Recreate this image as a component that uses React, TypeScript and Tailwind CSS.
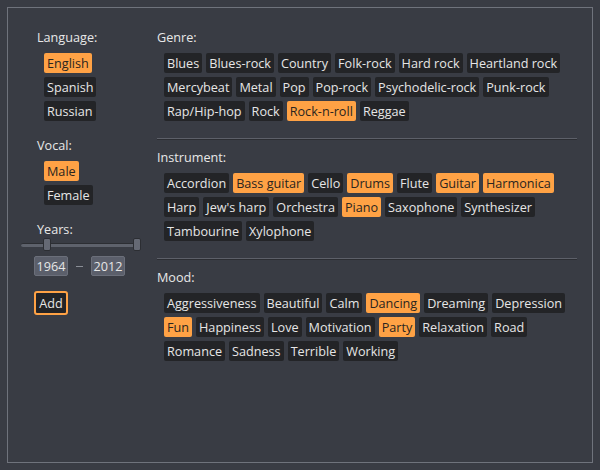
import React from 'react';

type Tag = { label: string; on?: boolean };

const t = (label: string, on = false): Tag => ({ label, on });

const language: Tag[] = [t('English', true), t('Spanish'), t('Russian')];
const vocal: Tag[] = [t('Male', true), t('Female')];

const genre: Tag[][] = [
  [t('Blues'), t('Blues-rock'), t('Country'), t('Folk-rock'), t('Hard rock'), t('Heartland rock')],
  [t('Mercybeat'), t('Metal'), t('Pop'), t('Pop-rock'), t('Psychodelic-rock'), t('Punk-rock')],
  [t('Rap/Hip-hop'), t('Rock'), t('Rock-n-roll', true), t('Reggae')],
];

const instrument: Tag[][] = [
  [t('Accordion'), t('Bass guitar', true), t('Cello'), t('Drums', true), t('Flute'), t('Guitar', true), t('Harmonica', true)],
  [t('Harp'), t("Jew's harp"), t('Orchestra'), t('Piano', true), t('Saxophone'), t('Synthesizer')],
  [t('Tambourine'), t('Xylophone')],
];

const mood: Tag[][] = [
  [t('Aggressiveness'), t('Beautiful'), t('Calm'), t('Dancing', true), t('Dreaming'), t('Depression')],
  [t('Fun', true), t('Happiness'), t('Love'), t('Motivation'), t('Party', true), t('Relaxation'), t('Road')],
  [t('Romance'), t('Sadness'), t('Terrible'), t('Working')],
];

function Chip({ tag }: { tag: Tag }) {
  return (
    <span
      className={
        'h-[20px] px-[3px] rounded-[2px] text-[12.65px] leading-[20px] whitespace-nowrap ' +
        (tag.on ? 'bg-[#ffa245] text-[#2a2520]' : 'bg-[#232427] text-[#e6e6e6]')
      }
    >
      {tag.label}
    </span>
  );
}

function Label({ children }: { children: React.ReactNode }) {
  return <div className="text-[12.65px] leading-[16px] text-[#e8e8e8]">{children}</div>;
}

function Section({ title, rows }: { title: string; rows: Tag[][] }) {
  return (
    <div>
      <Label>{title}</Label>
      <div className="mt-[8px] pl-[7px] flex flex-col gap-[4px]">
        {rows.map((row, i) => (
          <div key={i} className="flex gap-[4px]">
            {row.map((tag) => (
              <Chip key={tag.label} tag={tag} />
            ))}
          </div>
        ))}
      </div>
    </div>
  );
}

function Divider() {
  return <div className="mt-[17px] h-px bg-[#5d6069] border-b border-[#2c2e33] box-content" />;
}

export default function App() {
  return (
    <div className="w-[600px] h-[470px] bg-[#393c44] p-[7px] font-['Open_Sans',sans-serif]">
      <div className="h-full border border-[#6f737c] flex">
        {/* left column */}
        <div className="w-[122px] ml-[13px] pt-[21px]">
          <div className="pl-[16px]">
            <Label>Language:</Label>
          </div>
          <div className="mt-[8px] pl-[23px] flex flex-col items-start gap-[4px]">
            {language.map((tag) => (
              <Chip key={tag.label} tag={tag} />
            ))}
          </div>

          <div className="pl-[16px] mt-[16px]">
            <Label>Vocal:</Label>
          </div>
          <div className="mt-[8px] pl-[23px] flex flex-col items-start gap-[4px]">
            {vocal.map((tag) => (
              <Chip key={tag.label} tag={tag} />
            ))}
          </div>

          <div className="pl-[16px] mt-[16px]">
            <Label>Years:</Label>
          </div>

          {/* range slider */}
          <div className="relative mt-[1px] h-[13px] w-[120px]">
            <div className="absolute left-0 right-0 top-[5px] h-[4px] rounded-full bg-[#5e626c] border-t border-[#2c2e33]" />
            <div className="absolute left-[22px] top-0 w-[8px] h-[13px] rounded-[2px] bg-[#656974] border border-[#2c2e33]" />
            <div className="absolute left-[112px] top-0 w-[8px] h-[13px] rounded-[2px] bg-[#656974] border border-[#2c2e33]" />
          </div>

          <div className="mt-[5px] pl-[13px] flex items-center">
            <div className="w-[34px] h-[20px] rounded-[2px] bg-[#5b5f6b] border border-[#6b6f7a] text-[12.65px] leading-[18px] text-[#e6e6e6] text-center">
              1964
            </div>
            <div className="mx-[8px] w-[7px] h-px bg-[#8a8e96]" />
            <div className="w-[34px] h-[20px] rounded-[2px] bg-[#5b5f6b] border border-[#6b6f7a] text-[12.65px] leading-[18px] text-[#e6e6e6] text-center">
              2012
            </div>
          </div>

          <div className="mt-[14px] pl-[13px]">
            <button className="w-[34px] h-[24px] rounded-[3px] border-2 border-[#ffa245] bg-[#232427] text-[12.65px] leading-[20px] text-[#e6e6e6]">
              Add
            </button>
          </div>
        </div>

        {/* right column */}
        <div className="w-[420px] ml-[14px] pt-[21px]">
          <Section title="Genre:" rows={genre} />
          <Divider />
          <div className="mt-[9px]">
            <Section title="Instrument:" rows={instrument} />
          </div>
          <Divider />
          <div className="mt-[9px]">
            <Section title="Mood:" rows={mood} />
          </div>
        </div>
      </div>
    </div>
  );
}
